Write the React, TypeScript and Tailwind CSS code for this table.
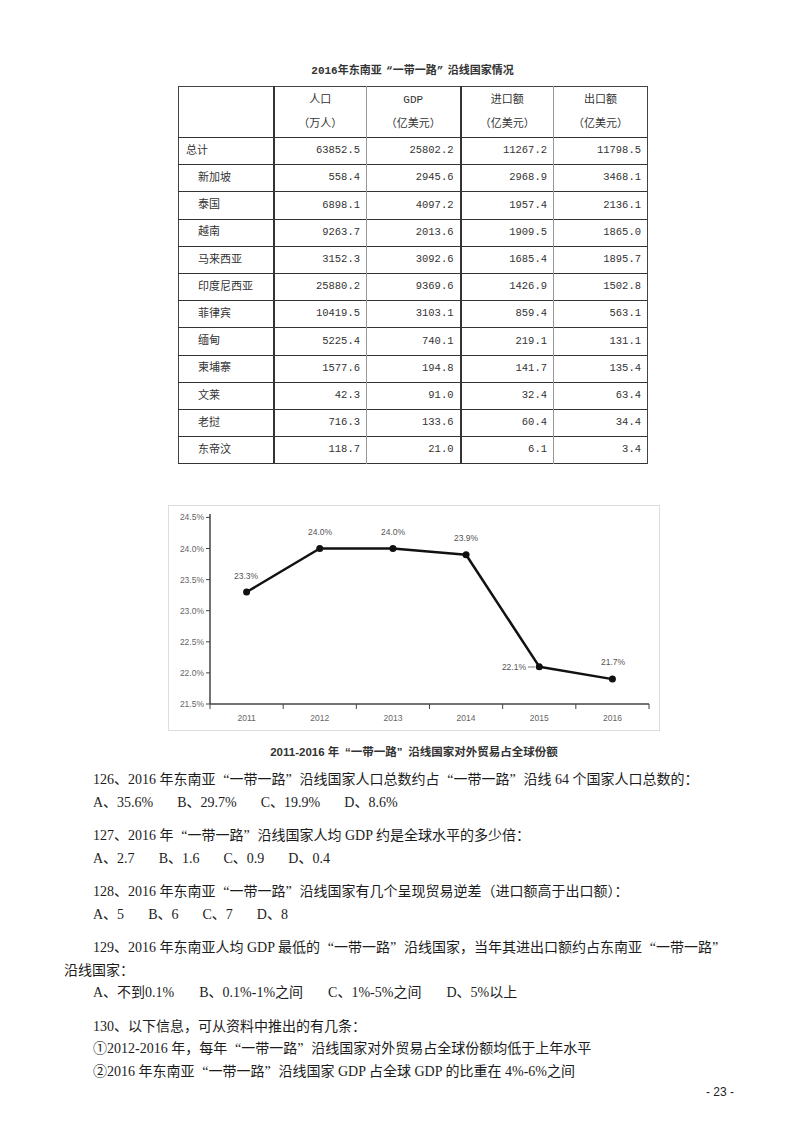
import React from 'react';

const rows: string[][] = [
  ['总计', '63852.5', '25802.2', '11267.2', '11798.5'],
  ['新加坡', '558.4', '2945.6', '2968.9', '3468.1'],
  ['泰国', '6898.1', '4097.2', '1957.4', '2136.1'],
  ['越南', '9263.7', '2013.6', '1909.5', '1865.0'],
  ['马来西亚', '3152.3', '3092.6', '1685.4', '1895.7'],
  ['印度尼西亚', '25880.2', '9369.6', '1426.9', '1502.8'],
  ['菲律宾', '10419.5', '3103.1', '859.4', '563.1'],
  ['缅甸', '5225.4', '740.1', '219.1', '131.1'],
  ['柬埔寨', '1577.6', '194.8', '141.7', '135.4'],
  ['文莱', '42.3', '91.0', '32.4', '63.4'],
  ['老挝', '716.3', '133.6', '60.4', '34.4'],
  ['东帝汶', '118.7', '21.0', '6.1', '3.4'],
];

const headers = [
  ['人口', '（万人）'],
  ['GDP', '（亿美元）'],
  ['进口额', '（亿美元）'],
  ['出口额', '（亿美元）'],
];

// vertical rule colours alternate dark / light like the scan
const colBorder = [
  'border-r-2 border-r-[#333]',
  'border-r border-r-[#999]',
  'border-r-2 border-r-[#333]',
  'border-r border-r-[#999]',
  'border-r border-r-[#444]',
];

// full-width curly quotes, as in a Songti document
const q = (s: string) =>
  s.split(/([“”])/).map((p, i) => {
    if (p === '“') return <span key={i} className="inline-block w-[1em] text-right">“</span>;
    if (p === '”') return <span key={i} className="inline-block w-[1em] text-left">”</span>;
    return <React.Fragment key={i}>{p}</React.Fragment>;
  });

const DataTable: React.FC = () => (
  <table className="table-fixed border-collapse border border-[#444] text-[#333] font-['Liberation_Mono','Noto_Sans_CJK_SC',monospace]">
    <colgroup>
      <col className="w-[95px]" />
      <col className="w-[93px]" />
      <col className="w-[94px]" />
      <col className="w-[93px]" />
      <col className="w-[94px]" />
    </colgroup>
    <thead>
      <tr className="h-[51px] border-b border-[#333]">
        <th className={colBorder[0]} />
        {headers.map((h, i) => (
          <th key={h[0]} className={`${colBorder[i + 1]} font-normal text-[11px] leading-[24px] text-center`}>
            <div>{h[0]}</div>
            <div>{h[1]}</div>
          </th>
        ))}
      </tr>
    </thead>
    <tbody>
      {rows.map((r, ri) => (
        <tr key={r[0]} className="h-[27.2px] border-b border-[#333]">
          <td className={`${colBorder[0]} text-[11px] ${ri === 0 ? 'pl-[7px]' : 'pl-[19px]'}`}>{r[0]}</td>
          {r.slice(1).map((v, ci) => (
            <td key={ci} className={`${colBorder[ci + 1]} text-[10.5px] text-right pr-[6px]`}>
              {v}
            </td>
          ))}
        </tr>
      ))}
    </tbody>
  </table>
);

const chartData = [
  { year: '2011', v: 23.3 },
  { year: '2012', v: 24.0 },
  { year: '2013', v: 24.0 },
  { year: '2014', v: 23.9 },
  { year: '2015', v: 22.1 },
  { year: '2016', v: 21.9 },
];

const TradeChart: React.FC = () => {
  const x0 = 41;
  const x1 = 480;
  const cw = (x1 - x0) / 6;
  const yOf = (v: number) => 198 - (v - 21.5) * 62.2;
  const ticks = [24.5, 24.0, 23.5, 23.0, 22.5, 22.0, 21.5];
  const pts = chartData.map((d, i) => ({ ...d, x: x0 + cw * (i + 0.5), y: yOf(d.v) }));

  return (
    <div className="w-[492px] h-[226px] border border-[#ddd] bg-white">
      <svg width="490" height="224" viewBox="0 0 490 224" fontFamily="Liberation Sans, sans-serif">
        {/* y axis */}
        <line x1={x0} y1={8} x2={x0} y2={198} stroke="#444" strokeWidth="1.5" />
        {ticks.map((t) => (
          <g key={t}>
            <line x1={x0 - 4} y1={yOf(t)} x2={x0} y2={yOf(t)} stroke="#444" strokeWidth="1" />
            <text x={x0 - 6} y={yOf(t) + 3} fontSize="8.5" fill="#666" textAnchor="end">
              {t.toFixed(1)}%
            </text>
          </g>
        ))}
        {/* x axis */}
        <line x1={x0} y1={198} x2={x1} y2={198} stroke="#444" strokeWidth="1.5" />
        {Array.from({ length: 7 }).map((_, i) => (
          <line key={i} x1={x0 + cw * i} y1={198} x2={x0 + cw * i} y2={203} stroke="#444" strokeWidth="1" />
        ))}
        {pts.map((p) => (
          <text key={p.year} x={p.x} y={215} fontSize="8.5" fill="#666" textAnchor="middle">
            {p.year}
          </text>
        ))}
        <polyline
          points={pts.map((p) => `${p.x},${p.y}`).join(' ')}
          fill="none"
          stroke="#111"
          strokeWidth="2.5"
          strokeLinejoin="round"
        />
        {pts.map((p) => (
          <circle key={p.year} cx={p.x} cy={p.y} r="3.5" fill="#111" />
        ))}
        <text x={77} y={73} fontSize="8.5" fill="#555" textAnchor="middle">23.3%</text>
        <text x={151} y={29} fontSize="8.5" fill="#555" textAnchor="middle">24.0%</text>
        <text x={224} y={29} fontSize="8.5" fill="#555" textAnchor="middle">24.0%</text>
        <text x={297} y={35} fontSize="8.5" fill="#555" textAnchor="middle">23.9%</text>
        <text x={357} y={164} fontSize="8.5" fill="#555" textAnchor="end">22.1%</text>
        <line x1={359} y1={161} x2={366} y2={161} stroke="#555" strokeWidth="0.8" />
        <text x={444} y={159} fontSize="8.5" fill="#555" textAnchor="middle">21.7%</text>
      </svg>
    </div>
  );
};

const Options: React.FC<{ items: string[]; gap?: string }> = ({ items, gap = 'gap-[24px]' }) => (
  <div className={`flex ${gap} pl-[29px] whitespace-nowrap`}>
    {items.map((it) => (
      <span key={it}>{it}</span>
    ))}
  </div>
);

const App: React.FC = () => {
  return (
    <div className="w-[800px] h-[1132px] bg-white text-[#1c1c1c] flex flex-col">
      {/* table title */}
      <div className="mt-[64px] ml-[178px] w-[469px] text-center text-[11px] leading-[14px] font-semibold text-[#333] font-['Liberation_Mono','Noto_Sans_CJK_SC',monospace]">
        {q('2016年东南亚“一带一路”沿线国家情况')}
      </div>
      <div className="mt-[8px] ml-[178px]">
        <DataTable />
      </div>

      {/* chart */}
      <div className="mt-[41px] ml-[168px]">
        <TradeChart />
      </div>
      <div className="mt-[14px] ml-[168px] w-[492px] text-center text-[11.5px] leading-[14px] font-bold text-[#333] font-['Liberation_Sans','Noto_Sans_CJK_SC',sans-serif]">
        {q('2011-2016 年“一带一路”沿线国家对外贸易占全球份额')}
      </div>

      {/* questions */}
      <div className="mt-[10px] ml-[64px] w-[680px] text-[14px] leading-[22.5px] whitespace-nowrap font-['Liberation_Serif','Noto_Sans_CJK_SC',serif]">
        <div>
          <p className="pl-[29px]">{q('126、2016 年东南亚“一带一路”沿线国家人口总数约占“一带一路”沿线 64 个国家人口总数的：')}</p>
          <Options items={['A、35.6%', 'B、29.7%', 'C、19.9%', 'D、8.6%']} />
        </div>
        <div className="mt-[11px]">
          <p className="pl-[29px]">{q('127、2016 年“一带一路”沿线国家人均 GDP 约是全球水平的多少倍：')}</p>
          <Options items={['A、2.7', 'B、1.6', 'C、0.9', 'D、0.4']} />
        </div>
        <div className="mt-[11px]">
          <p className="pl-[29px]">{q('128、2016 年东南亚“一带一路”沿线国家有几个呈现贸易逆差（进口额高于出口额）：')}</p>
          <Options items={['A、5', 'B、6', 'C、7', 'D、8']} />
        </div>
        <div className="mt-[11px]">
          <p className="pl-[29px]">{q('129、2016 年东南亚人均 GDP 最低的“一带一路”沿线国家，当年其进出口额约占东南亚“一带一路”')}</p>
          <p>沿线国家：</p>
          <Options items={['A、不到0.1%', 'B、0.1%-1%之间', 'C、1%-5%之间', 'D、5%以上']} gap="gap-[25px]" />
        </div>
        <div className="mt-[11px] pl-[29px]">
          <p>130、以下信息，可从资料中推出的有几条：</p>
          <p>{q('①2012-2016 年，每年“一带一路”沿线国家对外贸易占全球份额均低于上年水平')}</p>
          <p>{q('②2016 年东南亚“一带一路”沿线国家 GDP 占全球 GDP 的比重在 4%-6%之间')}</p>
        </div>
      </div>

      <div className="mt-[1px] ml-[706px] text-[12px] leading-[16px] text-[#222] font-['Liberation_Sans',sans-serif]">
        - 23 -
      </div>
    </div>
  );
};

export default App;
